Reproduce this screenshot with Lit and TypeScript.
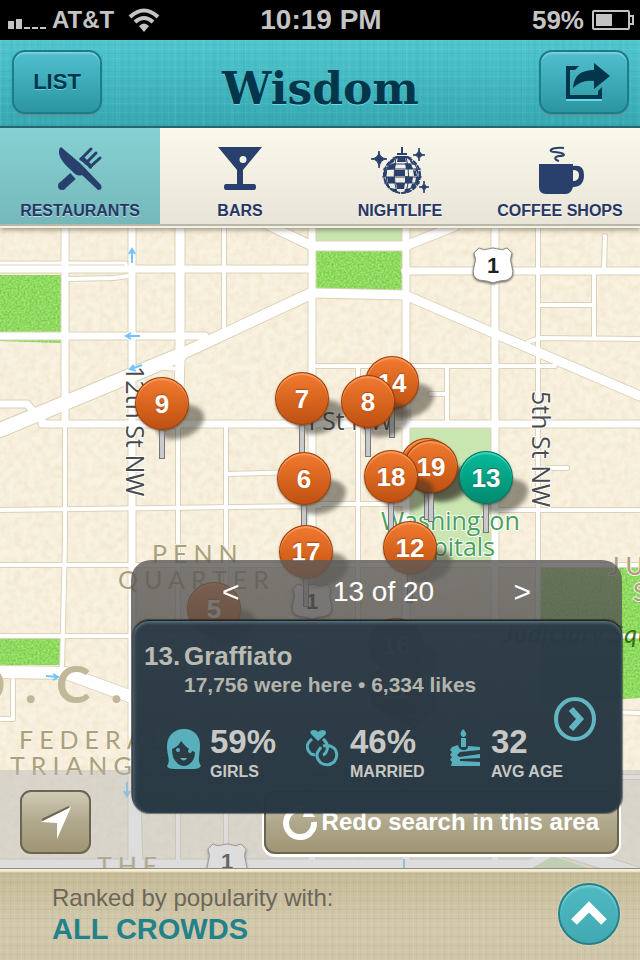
import { LitElement, html, css, svg } from "lit";
import { customElement, property, state } from "lit/decorators.js";
import { classMap } from "lit/directives/class-map.js";
import { styleMap } from "lit/directives/style-map.js";

interface Pin {
  n: number;
  x: number;
  y: number;
  active?: boolean;
}

/* Pin positions on the 640-unit map square, measured to the ball's centre. */
const PINS: Pin[] = [
  { n: 9, x: 162, y: 176 },
  { n: 7, x: 302, y: 171 },
  { n: 14, x: 392, y: 155 },
  { n: 8, x: 368, y: 174 },
  { n: 20, x: 427, y: 237 },
  { n: 19, x: 431, y: 239 },
  { n: 6, x: 304, y: 251 },
  { n: 18, x: 391, y: 249 },
  { n: 13, x: 486, y: 250, active: true },
  { n: 17, x: 306, y: 324 },
  { n: 12, x: 410, y: 320 },
  { n: 5, x: 214, y: 381 },
  { n: 16, x: 396, y: 417 },
  { n: 11, x: 396, y: 462 },
];

/* Streets as [path, width], drawn once for the kerb and once for the surface. */
const STREETS: [string, number][] = [
  ["M0 263H126V268", 3],
  ["M68 279L114 278L128 276", 4],
  ["M224 228V328", 4],
  ["M65 427V540L62 668", 4],
  ["M178 427V868", 4],
  ["M226 427V640", 4],
  ["M0 510L320 506", 4],
  ["M227 474L300 472", 4],
  ["M155 367L178 369", 4],
  ["M317 366H555", 4],
  ["M447 367V424", 4],
  ["M430 394H447", 4],
  ["M358 366V640", 4],
  ["M317 504H402", 4],
  ["M538 228V868", 4],
  ["M540 305H594", 4],
  ["M594 274V338", 4],
  ["M528 342L540 338L640 339", 4],
  ["M605 236L604 268", 4],
  ["M548 468H567", 4],
  ["M499 510H640", 4],
  ["M0 565H640", 4],
  ["M0 636H640", 4],
  ["M13 680V719H0", 4],
  ["M320 702L640 713", 4],
  ["M540 777H640", 4],
  ["M226 760V850", 4],
  ["M0 404H27L44 423", 7],
  ["M65 228V424", 7],
  ["M132 228V868", 7],
  ["M134 690L139 868", 7],
  ["M180 228V360L178 424", 9],
  ["M312 228V868", 7],
  ["M406 228V868", 7],
  ["M495 228V868", 7],
  ["M0 269H312", 7],
  ["M405 271H640", 7],
  ["M0 336H205", 7],
  ["M42 424H640", 7],
  ["M262 222L312 246H405L455 226", 9],
  ["M0 430L180 355", 14],
  ["M175 357L312 293", 11],
  ["M312 293L405 295L640 396", 9],
  ["M0 672L66 673L132 697L330 770", 12],
  ["M0 864H540", 9],
  ["M520 874L556 848L640 874", 12],
];

const shield = (x: number, y: number) => svg`
  <g transform="translate(${x} ${y})">
    <path class="shield" d="M-14 -17Q-9 -14 -5 -16Q0 -18 5 -16Q9 -14 14 -17L19 -12Q16 -6 19 2Q22 12 14 15Q4 16 0 18Q-4 16 -14 15Q-22 12 -19 2Q-16 -6 -19 -12Z"/>
    <text class="route" x="0" y="8">1</text>
  </g>`;

@customElement("city-map")
class CityMap extends LitElement {
  static styles = css`
    :host { display: block; position: absolute; inset: 0; overflow: hidden; }
    .ground { display: block; width: 100%; height: 100%; }
    .kerb { fill: none; stroke: #dbd2b9; stroke-linecap: round; stroke-linejoin: round; }
    .road { fill: none; stroke: #fff; stroke-linecap: round; stroke-linejoin: round; }
    .shield { fill: #fff; stroke: #8f8c86; stroke-width: 1; filter: drop-shadow(0 1px 1px rgba(0,0,0,.6)); }
    .route { font: bold 22px "Liberation Sans", sans-serif; fill: #222; text-anchor: middle; }
    .street { font: 25px "Open Sans", sans-serif; fill: #4b4b4b; stroke: #fff; stroke-width: 2; paint-order: stroke; }
    .area { font: 25px Lato, sans-serif; letter-spacing: 6px; fill: #aaa07c; stroke: #f8f2e2; stroke-width: 2; paint-order: stroke; }
    .city { font: bold 52px Lato, sans-serif; letter-spacing: 20px; fill: #c2b798; }
    .park { font: 25px "Open Sans", sans-serif; fill: #47a05b; stroke: #fff; stroke-width: 2; paint-order: stroke; }
    .square { font: italic 25px Lato, sans-serif; fill: #347212; letter-spacing: 1px; }
    .arrow { fill: none; stroke: #74c4fb; stroke-width: 2; }
  `;

  render() {
    return html`
      <svg class="ground" viewBox="0 228 640 640" preserveAspectRatio="xMidYMid slice" role="img" aria-label="Map">
        <defs>
          <filter id="paper" x="0" y="0" width="100%" height="100%" color-interpolation-filters="sRGB">
            <feTurbulence type="fractalNoise" baseFrequency="0.14" numOctaves="3" seed="4"/>
            <feColorMatrix values="0 0 0 0 .88  0 0 0 0 .82  0 0 0 0 .67  .6 0 0 0 -.2"/>
          </filter>
          <filter id="grass" x="0" y="0" width="100%" height="100%" color-interpolation-filters="sRGB">
            <feTurbulence type="fractalNoise" baseFrequency="0.5" numOctaves="3" seed="9" result="n"/>
            <feColorMatrix values="0 0 0 0 .42  0 0 0 0 .79  0 0 0 0 .24  2 0 0 0 -.65"/>
            <feComposite in2="SourceAlpha" operator="in" result="m"/>
            <feMerge><feMergeNode in="SourceGraphic"/><feMergeNode in="m"/></feMerge>
          </filter>
        </defs>
        <rect x="0" y="228" width="640" height="640" fill="#f9f2e1"/>
        <rect x="0" y="228" width="640" height="640" filter="url(#paper)"/>
        <g fill="#a3e374" filter="url(#grass)">
          <path d="M0 275H62V343L0 341Z"/>
          <path d="M316 250H402V290H316Z"/>
          <path d="M0 637H61V665H0Z"/>
          <path d="M540 567H640V698L545 704L540 694Z"/>
        </g>
        <g fill="#c9e5b0">
          <path d="M316 228H402V242H316Z"/>
          <path d="M409 428H491V568H409Z"/>
        </g>
        ${STREETS.map(([d, w]) => svg`<path class="kerb" d=${d} stroke-width=${w + 2}/>`)}
        ${STREETS.map(([d, w]) => svg`<path class="road" d=${d} stroke-width=${w}/>`)}
        <path d="M553 856L590 869H530Z" fill="#c9e5b0"/>
        <g class="arrow">
          <path d="M132 263V250M129 254L132 249L135 254"/>
          <path d="M140 336H127M131 333L126 336L131 339"/>
          <path d="M142 365L131 369M134 365L130 369L136 371"/>
          <path d="M46 676L57 677M53 674L58 677L53 680"/>
          <path d="M127 782V795M124 791L127 796L130 791"/>
          <path d="M404 859V868"/>
        </g>
        <text class="city" x="-34" y="703">D.C.</text>
        <text class="area" x="152" y="563">PENN</text>
        <text class="area" x="118" y="589">QUARTER</text>
        <text class="area" x="19" y="749">FEDERAL</text>
        <text class="area" x="10" y="775">TRIANGLE</text>
        <text class="area" x="97" y="875">THE</text>
        <text class="area" x="609" y="575">JU</text>
        <text class="area" x="633" y="601">S</text>
        <text class="square" x="503" y="643">Judiciary Square</text>
        <text class="park" x="381" y="530">Washington</text>
        <text class="park" x="387" y="556">Hospitals</text>
        <text class="street" x="297" y="430">H St NW</text>
        <text class="street" transform="translate(126 366) rotate(90)">12th St NW</text>
        <text class="street" transform="translate(532 391) rotate(90)">5th St NW</text>
        <text class="street" transform="translate(399 623) rotate(90)">7th St NW</text>
        ${shield(493, 265)} ${shield(312, 601)} ${shield(227, 861)}
      </svg>
    `;
  }
}

@customElement("map-pin")
class MapPin extends LitElement {
  @property({ type: Number }) n = 0;
  @property({ type: Boolean }) active = false;

  static styles = css`
    :host { display: block; position: absolute; width: 54px; height: 82px; transform: translate(-27px, -27px); }
    .pin { position: relative; display: block; width: 54px; height: 82px; padding: 0; border: 0; background: none; cursor: pointer; }
    .shade { position: absolute; left: 20px; top: 29px; width: 50px; height: 32px; border-radius: 50%; background: rgba(50, 46, 36, .5); filter: blur(2px); transform: rotate(-20deg); }
    .stem { position: absolute; left: 24px; top: 50px; width: 4px; height: 30px; border: 1px solid #77777a; background: linear-gradient(#8f8f90, #c9c9cb 10px); }
    .ball { position: absolute; left: 0; top: 0; width: 54px; height: 53px; box-sizing: border-box; border: 1px solid #9c3f08; border-radius: 50%; background: linear-gradient(#f27a31, #d9661f 50%, #bd5013); box-shadow: inset 0 2px 1px rgba(255, 190, 140, .5), 0 1px 2px rgba(60, 30, 0, .5); color: #fff; font: bold 26px/52px "Liberation Sans", sans-serif; text-align: center; text-shadow: 0 -1px 1px rgba(90, 30, 0, .4); }
    .ball.active { border-color: #04735d; background: linear-gradient(#07bb9b, #03a384 50%, #038a70); box-shadow: inset 0 2px 1px rgba(150, 255, 230, .4), 0 1px 2px rgba(0, 50, 40, .5); }
  `;

  render() {
    return html`<button class="pin">
      <span class="shade"></span><span class="stem"></span>
      <span class=${classMap({ ball: true, active: this.active })}>${this.n}</span>
    </button>`;
  }
}

const TAB_ICONS = {
  restaurants: svg`
    <path d="M11 1L31 18L51 39Q53 44 48 44L32 29Q27 31 22 25Q8 13 9 5Q9 2 11 1Z" fill="currentColor"/>
    <path d="M12 40L23 30" stroke="currentColor" stroke-width="8"/>
    <circle cx="12" cy="40" r="4" fill="currentColor"/>
    <path d="M29 13L41 23L43 20L33 10Z" fill="currentColor"/>
    <path d="M31 13L41 3M36 17L46 7M40 21L50 12" stroke="currentColor" stroke-width="3" stroke-linecap="round"/>`,
  bars: svg`
    <path d="M8 1H52L33 24V38H44Q46 38 46 41Q46 44 44 44H16Q14 44 14 41Q14 38 16 38H27V24ZM33 10A3.500 3.500 0 1 0 33 17A3.500 3.500 0 1 0 33 10Z" fill="currentColor" fill-rule="evenodd"/>`,
  nightlife: svg`
    <path d="M32 1V9M27 8H37" stroke="currentColor" stroke-width="2"/>
    <path d="M26 10H38L42 12H22Z" fill="currentColor"/>
    <circle cx="32" cy="29" r="18" fill="none" stroke="currentColor" stroke-width="2" stroke-dasharray="5 1"/>
    <g fill="currentColor">
      <path d="M20 15L25 12L24 16L18 19ZM28 11H35L36 16H27ZM39 13L43 16L46 20L41 17Z"/>
      <path d="M19 19L26 17L25 23L17 24ZM35 17L41 18L43 23H36ZM46 22L48 24L49 28L45 24Z"/>
      <path d="M25 24L35 24V30H24ZM14 25L17 24L16 30H13ZM43 24L46 25L47 30H44Z"/>
      <path d="M17 31H24L25 37H18ZM35 30L43 31L42 37L35 37ZM46 31H50L48 37H45Z"/>
      <path d="M26 37H35L34 43H27ZM15 37L18 38L21 43L18 42ZM42 38L46 37L44 42L40 43Z"/>
      <path d="M20 42L26 43L28 47L24 46ZM35 43L41 42L39 46L34 47Z"/>
    </g>
    <g stroke="currentColor" fill="none">
      <path d="M13 23H51M12 31H52M14 37H50M17 18H47M26 12Q22 29 27 47M36 11Q41 29 36 47M19 18Q13 29 19 41M45 18Q51 29 45 41"/>
    </g>
    <path d="M9 5Q9 12 17 13Q10 13 9 22Q9 13 1 13Q9 12 9 5ZM49 2Q49 9 55 9Q49 9 49 15Q49 9 43 9Q49 9 49 2ZM54 35Q54 41 59 41Q54 41 54 47Q54 41 49 41Q54 41 54 35Z" fill="currentColor" stroke="currentColor" stroke-width="1"/>`,
  coffee: svg`
    <path d="M9 18H43V20Q54 18 54 29Q54 41 43 41Q41 48 36 48H16Q9 48 9 41ZM43 24V35Q49 35 49 29Q49 24 43 24Z" fill="currentColor" fill-rule="evenodd"/>
    <path d="M34 2C20 1 17 6 25 6C35 7 37 10 29 10C23 11 25 14 29 15" fill="none" stroke="currentColor" stroke-width="2"/>`,
};

type TabId = keyof typeof TAB_ICONS;
const TABS: { id: TabId; label: string }[] = [
  { id: "restaurants", label: "RESTAURANTS" },
  { id: "bars", label: "BARS" },
  { id: "nightlife", label: "NIGHTLIFE" },
  { id: "coffee", label: "COFFEE SHOPS" },
];

const STATS = [
  {
    value: "59%",
    label: "GIRLS",
    icon: svg`<path fill-rule="evenodd" d="M18 0C29 0 34 8 34 16C34 27 31 31 35 37Q33 40 28 40H22V36Q29 32 29 23Q22 21 15 12Q12 18 6 20Q6 32 14 36V40H8Q2 40 1 37C5 31 1 27 1 17C1 7 8 0 18 0Z"/><path d="M14 36Q18 38 22 36V40H14Z"/><circle cx="12" cy="21" r="2"/><circle cx="24" cy="22" r="2"/><path d="M14 29H21Q18 34 14 29Z"/>`,
  },
  {
    value: "46%",
    label: "MARRIED",
    icon: svg`<path d="M12 12L5 5Q3 1 8 1Q11 1 12 3Q14 1 17 1Q22 2 19 6Z"/><path d="M6 10Q-3 17 5 25L9 26M17 10Q23 15 21 21Q20 25 17 26M17 17Q24 15 29 20Q33 27 28 33Q22 38 15 34Q8 27 13 21L15 18" fill="none" stroke="currentColor" stroke-width="3"/>`,
  },
  {
    value: "32",
    label: "AVG AGE",
    icon: svg`<path d="M16 0Q22 6 17 8H16Q11 6 16 0ZM14 9H19V18H14ZM5 18L11 16Q12 21 17 21Q21 21 21 17L33 18V21L13 23L10 26L12 28L33 25V29L13 30V32L33 33V37H4L5 33L3 31L5 28L3 26L5 23L3 21Z"/>`,
  },
];

@customElement("app-root")
class AppRoot extends LitElement {
  @state() private tab: TabId = "restaurants";

  static styles = css`
    :host { display: flex; flex-direction: column; min-height: 100vh; background: #d3c7a3; font-family: "Liberation Sans", sans-serif; }
    button { font-family: inherit; cursor: pointer; }
    svg { display: block; flex: none; }

    .status { display: grid; grid-template-columns: 1fr auto 1fr; align-items: center; height: 40px; padding: 0 6px 0 8px; background: #000; color: #c4c4c4; font-weight: bold; font-size: 26px; }
    .carrier { display: flex; align-items: center; gap: 6px; font-size: 24px; }
    .wifi { margin-left: 8px; }
    .clock { font-size: 28px; }
    .power { display: flex; align-items: center; justify-content: flex-end; gap: 8px; }

    .header { display: flex; align-items: center; justify-content: space-between; box-sizing: border-box; height: 88px; padding: 0 11px 3px 12px; border-bottom: 2px solid #27666b; color: #04364b;
      background:
        repeating-linear-gradient(90deg, rgba(255,255,255,.04) 0 1px, transparent 1px 3px, rgba(0,70,90,.03) 3px 4px, transparent 4px 7px),
        repeating-linear-gradient(90deg, rgba(255,255,255,.04) 0 2px, transparent 2px 11px, rgba(0,70,90,.03) 11px 13px, transparent 13px 29px),
        repeating-linear-gradient(rgba(255,255,255,.05) 0 1px, transparent 1px 4px, rgba(0,70,90,.04) 4px 5px, transparent 5px 9px),
        linear-gradient(#4fc6cd, #35a8b2); }
    .title { margin: 14px 0 0; font: bold 44px/60px "DejaVu Serif", serif; text-shadow: 0 1px 0 #67dbe5; }
    .tool { display: flex; align-items: center; justify-content: center; box-sizing: border-box; width: 90px; height: 64px; border: 2px solid #177f8b; border-radius: 13px; background: linear-gradient(#50bfcf, #2b96a0); box-shadow: inset 0 2px 1px rgba(255,255,255,.25), 0 1px 1px rgba(150,110,110,.7); color: #04364b; font-size: 22px; font-weight: bold; text-shadow: 0 1px 0 #5fd4e2; }
    .share { margin-left: 8px; }

    .tabs { position: relative; z-index: 1; display: grid; grid-template-columns: repeat(4, 1fr); margin-bottom: 2px; border-bottom: 2px solid #b9b7aa; background: linear-gradient(#fbf8ec, #e8e5d8); box-shadow: 0 2px 0 #f4f0e2, 0 4px 5px rgba(70,60,40,.5); }
    .tab { display: flex; flex-direction: column; align-items: center; gap: 5px; padding: 18px 0 3px; border: 0; background: none; color: #28406b; }
    .tab.on { background: linear-gradient(#86d1d3, #75b8ba); }
    .tab-label { color: #263767; font-size: 16px; line-height: 20px; font-weight: bold; white-space: nowrap; text-shadow: 0 1px 0 rgba(255,255,255,.5); }

    .map { position: relative; flex: 1; min-height: 640px; display: flex; flex-direction: column; justify-content: flex-end; overflow: hidden; }
    .bar { position: relative; display: flex; justify-content: space-between; padding: 20px 21px 14px 20px; background: rgba(180,180,180,.46); }
    .map-button { display: flex; align-items: center; justify-content: center; gap: 3px; box-sizing: border-box; height: 64px; padding: 0 15px; border: 2px solid #6a6452; border-radius: 11px; background: linear-gradient(#cfcbb6, #b0a88c 50%, #a09675); color: #fff; font-size: 24px; font-weight: bold; white-space: nowrap; }
    .redo { padding-right: 18px; box-shadow: 0 1px 0 2px #fff; }

    .card { position: absolute; left: 131px; right: 18px; bottom: 55px; border-radius: 20px; background: linear-gradient(rgba(92,90,88,.8), rgba(82,80,78,.8) 80px); color: #c3c4be; }
    .pager { display: flex; align-items: center; justify-content: space-between; box-sizing: border-box; height: 60px; padding: 4px 91px 0; color: #fff; font-size: 28px; }
    .step { padding: 0; border: 0; background: none; color: #fff; font-size: 30px; }
    .count { margin-left: 14px; }
    .detail { position: relative; margin-left: 2px; box-sizing: border-box; padding: 20px 11px 31px; border-top: 1px solid #252019; border-radius: 16px; background: linear-gradient(rgba(38,55,68,.88), rgba(34,52,65,.9)); box-shadow: inset 0 2px 3px rgba(110,145,160,.6), inset 3px 0 3px rgba(80,100,112,.35), 0 0 1px 1px rgba(10,16,22,.5); }
    .venue { display: grid; grid-template-columns: 36px 1fr; column-gap: 4px; margin: 0; color: #b9bab2; font-size: 26px; line-height: 30px; }
    .buzz { margin: 0 0 25px 40px; color: #b3b4ac; font-size: 21px; line-height: 28px; font-weight: bold; white-space: nowrap; }
    .stats { display: grid; grid-template-columns: 140px 141px auto; justify-content: start; margin-left: 22px; }
    .stat { display: flex; gap: 8px; color: #57b0bb; }
    .stat-icon { margin-top: 5px; }
    .figures { display: flex; flex-direction: column; gap: 2px; color: #c8c9c4; font-weight: bold; white-space: nowrap; }
    .value { font-size: 33px; line-height: 36px; }
    .label { font-size: 16px; line-height: 20px; }
    .more { position: absolute; right: 26px; top: 50%; margin-top: -20px; }

    .footer { display: flex; align-items: center; justify-content: space-between; box-sizing: border-box; min-height: 92px; padding: 3px 20px 5px 52px; border-top: 1px solid #8f8c84;
      background:
        linear-gradient(#f5eed2 0 2px, transparent 4px),
        repeating-linear-gradient(90deg, rgba(255,255,255,.06) 0 1px, transparent 1px 3px, rgba(110,90,40,.05) 3px 4px, transparent 4px 7px),
        repeating-linear-gradient(rgba(255,255,255,.06) 0 1px, transparent 1px 4px, rgba(110,90,40,.06) 4px 5px, transparent 5px 9px),
        linear-gradient(#c3b994, #d2c9ad 60%, #cfc6aa); }
    .rank { margin: 2px 0 0; color: #6c665a; font-size: 24px; line-height: 28px; }
    .crowd { margin: 0; color: #22818a; font-size: 29px; line-height: 34px; font-weight: bold; }
    .up { display: flex; align-items: center; justify-content: center; box-sizing: border-box; width: 62px; height: 62px; padding: 0; border: 2px solid #27808a; border-radius: 50%; background: linear-gradient(#4fb9c0, #41a9b2); box-shadow: inset 0 2px 2px rgba(150,230,235,.6), 0 0 2px #e8f0e0; }
  `;

  render() {
    return html`
      <div class="status">
        <div class="carrier">
          <svg width="38" height="20" fill="currentColor" aria-hidden="true">
            <path d="M0 11H6V19H0ZM8 9H14V19H8ZM16 17H22V19H16ZM24 17H30V19H24ZM32 17H38V19H32Z"/>
          </svg>
          <span>AT&amp;T</span>
          <svg class="wifi" width="32" height="24" viewBox="0 0 32 24" fill="none" stroke="currentColor" stroke-width="4" aria-hidden="true">
            <path d="M2 9Q16 -4 30 9M7 14Q16 6 25 14"/>
            <path d="M11 18Q16 13 21 18L16 24Z" fill="currentColor" stroke="none"/>
          </svg>
        </div>
        <span class="clock">10:19 PM</span>
        <div class="power">
          <span>59%</span>
          <svg width="42" height="20" viewBox="0 0 42 20" aria-hidden="true">
            <rect x="1" y="1" width="36" height="18" rx="1" fill="none" stroke="currentColor" stroke-width="2"/>
            <path d="M4 4H20V16H4Z" fill="currentColor"/>
            <path d="M38 6H41V14H38" fill="none" stroke="currentColor" stroke-width="2"/>
          </svg>
        </div>
      </div>

      <header class="header">
        <button class="tool">LIST</button>
        <h1 class="title">Wisdom</h1>
        <button class="tool" aria-label="Share">
          <svg class="share" width="46" height="42" viewBox="0 0 46 42" fill="currentColor" aria-hidden="true">
            <path d="M1 38H37V40H1Z" fill="#62dbe8"/>
            <path d="M1 5H14L10 9H5V34H33V30L37 26V38H1Z"/>
            <path d="M29 2L45 15L29 28V20Q17 18 8 27Q9 9 29 9Z"/>
          </svg>
        </button>
      </header>

      <nav class="tabs" aria-label="Categories">
        ${TABS.map(
          (t) => html`<button class=${classMap({ tab: true, on: t.id === this.tab })} @click=${() => (this.tab = t.id)}>
            <svg width="60" height="50" viewBox="0 0 60 50" aria-hidden="true">${TAB_ICONS[t.id]}</svg>
            <span class="tab-label">${t.label}</span>
          </button>`
        )}
      </nav>

      <main class="map">
        <city-map></city-map>
        ${PINS.map(
          (p) => html`<map-pin .n=${p.n} .active=${!!p.active}
            style=${styleMap({ left: `${(p.x / 640) * 100}%`, top: `${(p.y / 640) * 100}%` })}></map-pin>`
        )}
        <div class="bar">
          <button class="map-button" aria-label="My location">
            <svg width="37" height="34" viewBox="0 0 37 34" aria-hidden="true">
              <path d="M5 15L32 2" stroke="#6d6650" stroke-width="2"/>
              <path d="M4 17L34 2L20 34V18Z" fill="#fff"/>
            </svg>
          </button>
          <button class="map-button redo">
            <svg width="38" height="36" viewBox="0 0 38 36" aria-hidden="true">
              <path d="M24 6A14 14 0 1 0 33 18" fill="none" stroke="#fff" stroke-width="6"/>
              <path d="M25 0L34 13H22Z" fill="#fff"/>
            </svg>
            <span>Redo search in this area</span>
          </button>
        </div>

        <section class="card">
          <div class="pager">
            <button class="step" aria-label="Previous">&lt;</button>
            <span class="count">13 of 20</span>
            <button class="step" aria-label="Next">&gt;</button>
          </div>
          <div class="detail">
            <h2 class="venue"><span>13.</span><span>Graffiato</span></h2>
            <p class="buzz">17,756 were here • 6,334 likes</p>
            <div class="stats">
              ${STATS.map(
                (s) => html`<div class="stat">
                  <svg class="stat-icon" width="36" height="40" viewBox="0 0 36 40" fill="currentColor" aria-hidden="true">${s.icon}</svg>
                  <div class="figures"><span class="value">${s.value}</span><span class="label">${s.label}</span></div>
                </div>`
              )}
            </div>
            <a class="more" href="#graffiato" aria-label="Open Graffiato">
              <svg width="42" height="44" viewBox="0 0 42 44" fill="none" stroke="#62b6c1" aria-hidden="true">
                <ellipse cx="21" cy="22" rx="19" ry="20" stroke-width="4"/>
                <path d="M17 12L26 22L17 32" stroke-width="6"/>
              </svg>
            </a>
          </div>
        </section>
      </main>

      <footer class="footer">
        <div>
          <p class="rank">Ranked by popularity with:</p>
          <p class="crowd">ALL CROWDS</p>
        </div>
        <button class="up" aria-label="Change crowd">
          <svg width="38" height="26" viewBox="0 0 38 26" aria-hidden="true">
            <path d="M4 21L19 6L34 21" fill="none" stroke="#fff" stroke-width="8"/>
          </svg>
        </button>
      </footer>
    `;
  }
}
